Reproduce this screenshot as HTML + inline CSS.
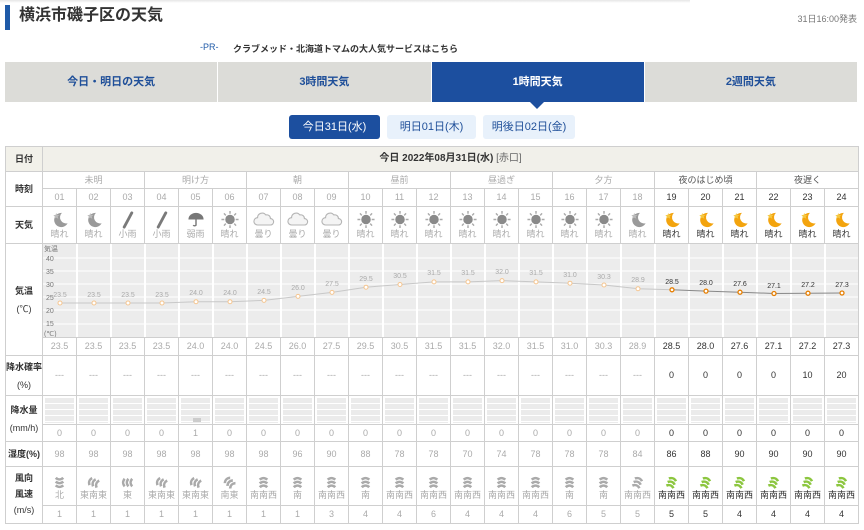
<!DOCTYPE html>
<html><head><meta charset="utf-8">
<style>
*{margin:0;padding:0;box-sizing:border-box}
body{width:864px;height:530px;background:#fff;font-family:"Liberation Sans","Noto Sans CJK JP",sans-serif;position:relative;overflow:hidden;color:#333}
.shadow{position:absolute;left:0;top:0;width:690px;height:3px;background:linear-gradient(#e6e6e6,#fff)}
.bar{position:absolute;left:5px;top:5px;width:5px;height:25px;background:#1f5aa8}
.title{position:absolute;left:19px;top:5px;font-size:16px;font-weight:bold;color:#333;line-height:22px}
.pub{position:absolute;right:7px;top:12px;font-size:9px;color:#777}
.pr{position:absolute;left:200px;top:42px;font-size:9px;color:#1f5aa8}
.prt{position:absolute;left:233px;top:42px;font-size:9px;font-weight:bold;color:#333}
.tabs{position:absolute;left:5px;top:62px;width:852px;height:40px;display:flex}
.tab{flex:1;background:#dcdcd8;color:#1f4f99;font-size:11px;font-weight:bold;text-align:center;line-height:40px;border-right:1px solid #fff}
.tab.on{background:#1c4f9f;color:#fff}
.tri{position:absolute;left:529px;top:101px;border-left:8px solid transparent;border-right:8px solid transparent;border-top:8px solid #1c4f9f}
.db{position:absolute;top:115px;height:24px;line-height:24px;font-size:11px;text-align:center;border-radius:3px;background:#e8f1fb;color:#1f4f99}
table{position:absolute;left:5px;top:146px;border-collapse:collapse;table-layout:fixed;width:853px}
td{border:1px solid #cfcfcf;text-align:center;font-size:9px;color:#aaa;padding:0;line-height:1.2;overflow:hidden;white-space:nowrap}
td.l{color:#333;font-weight:bold;font-size:9px;background:#fff}
.f{color:#333}
.fp{color:#555}
svg{display:block;margin:0 auto}
.rb{margin:2px 2px 1px;height:25px;background:repeating-linear-gradient(#ebebeb 0 5px,#fff 5px 6px);position:relative}
.wi{height:15px;margin-top:4px}
</style></head><body>
<svg width="0" height="0" style="position:absolute">
<defs>
<symbol id="mg" viewBox="0 0 20 20"><path d="M12 3a7.5 7.5 0 1 0 6 11a6.5 6.5 0 0 1-6-11z" fill="#9a9a9a"/><path d="M6 3l1 2.2 2.3.2-1.7 1.5.6 2.3-2.2-1.2-2 1.2.5-2.3L3 5.4l2.3-.2z" fill="#bbb"/></symbol>
<symbol id="mo" viewBox="0 0 20 20"><path d="M12 3a7.5 7.5 0 1 0 6 11a6.5 6.5 0 0 1-6-11z" fill="#f3a40e"/><path d="M6 3l1 2.2 2.3.2-1.7 1.5.6 2.3-2.2-1.2-2 1.2.5-2.3L3 5.4l2.3-.2z" fill="#f5c842"/></symbol>
<symbol id="sun" viewBox="0 0 20 20"><circle cx="10" cy="10" r="5" fill="#8a8a8a"/><g stroke="#aaa" stroke-width="1.5"><path d="M10 1v3M10 16v3M1 10h3M16 10h3M3.6 3.6l2 2M14.4 14.4l2 2M3.6 16.4l2-2M14.4 5.6l2-2"/></g></symbol>
<symbol id="cl" viewBox="0 0 24 20"><path d="M5 16a4 4 0 0 1 0-8a5 5 0 0 1 9-3a4 4 0 0 1 5 4a3.5 3.5 0 0 1 0 7z" fill="#f4f4f4" stroke="#b5b5b5" stroke-width="1.2"/></symbol>
<symbol id="sr" viewBox="0 0 20 20"><path d="M6 18L14 3" stroke="#7a7a7a" stroke-width="3" stroke-linecap="round"/></symbol>
<symbol id="um" viewBox="0 0 20 20"><path d="M2 10a8 7 0 0 1 16 0z" fill="#777"/><path d="M10 9v7a2 2 0 0 1-3 0" stroke="#777" stroke-width="1.5" fill="none"/></symbol>
<symbol id="wg" viewBox="0 0 16 16"><path d="M3 4q5-4 10 0l-2 2q-3-3-6 0zM3 8q5-4 10 0l-2 2q-3-3-6 0zM3 12q5-4 10 0l-2 2q-3-3-6 0z" fill="#aaa"/></symbol>
<symbol id="wn" viewBox="0 0 16 16"><path d="M3 4q5-4 10 0l-2 2q-3-3-6 0zM3 8q5-4 10 0l-2 2q-3-3-6 0zM3 12q5-4 10 0l-2 2q-3-3-6 0z" fill="#8cc63f"/></symbol>
</defs></svg>
<div class="shadow"></div>
<div class="bar"></div>
<div class="title">横浜市磯子区の天気</div>
<div class="pub">31日16:00発表</div>
<div class="pr">-PR-</div>
<div class="prt">クラブメッド・北海道トマムの大人気サービスはこちら</div>
<div class="tabs"><div class="tab">今日・明日の天気</div><div class="tab">3時間天気</div><div class="tab on">1時間天気</div><div class="tab" style="border:0">2週間天気</div></div>
<div class="tri"></div>
<div class="db" style="left:289px;width:91px;background:#1c4f9f;color:#fff">今日31日(水)</div>
<div class="db" style="left:387px;width:89px">明日01日(木)</div>
<div class="db" style="left:483px;width:92px">明後日02日(金)</div>

<table>
<colgroup><col style="width:37px"><col span="24" style="width:34px"></colgroup>
<tr style="height:25px"><td class="l" style="background:#f2f1ea">日付</td><td colspan="24" style="background:#f1f0ea;color:#333;font-weight:bold;font-size:10px">今日 2022年08月31日(水) <span style="font-weight:normal;color:#666">[赤口]</span></td></tr>
<tr style="height:17px"><td class="l" rowspan="2">時刻</td><td colspan="3">未明</td><td colspan="3">明け方</td><td colspan="3">朝</td><td colspan="3">昼前</td><td colspan="3">昼過ぎ</td><td colspan="3">夕方</td><td colspan="3" class="fp">夜のはじめ頃</td><td colspan="3" class="fp">夜遅く</td></tr>
<tr style="height:18px"><td>01</td><td>02</td><td>03</td><td>04</td><td>05</td><td>06</td><td>07</td><td>08</td><td>09</td><td>10</td><td>11</td><td>12</td><td>13</td><td>14</td><td>15</td><td>16</td><td>17</td><td>18</td><td class="f">19</td><td class="f">20</td><td class="f">21</td><td class="f">22</td><td class="f">23</td><td class="f">24</td></tr>
<tr style="height:37px"><td class="l">天気</td>
<td><svg width="20" height="19"><use href="#mg"/></svg>晴れ</td>
<td><svg width="20" height="19"><use href="#mg"/></svg>晴れ</td>
<td><svg width="20" height="19"><use href="#sr"/></svg>小雨</td>
<td><svg width="20" height="19"><use href="#sr"/></svg>小雨</td>
<td><svg width="20" height="19"><use href="#um"/></svg>弱雨</td>
<td><svg width="20" height="19"><use href="#sun"/></svg>晴れ</td>
<td><svg width="22" height="19"><use href="#cl"/></svg>曇り</td>
<td><svg width="22" height="19"><use href="#cl"/></svg>曇り</td>
<td><svg width="22" height="19"><use href="#cl"/></svg>曇り</td>
<td><svg width="20" height="19"><use href="#sun"/></svg>晴れ</td>
<td><svg width="20" height="19"><use href="#sun"/></svg>晴れ</td>
<td><svg width="20" height="19"><use href="#sun"/></svg>晴れ</td>
<td><svg width="20" height="19"><use href="#sun"/></svg>晴れ</td>
<td><svg width="20" height="19"><use href="#sun"/></svg>晴れ</td>
<td><svg width="20" height="19"><use href="#sun"/></svg>晴れ</td>
<td><svg width="20" height="19"><use href="#sun"/></svg>晴れ</td>
<td><svg width="20" height="19"><use href="#sun"/></svg>晴れ</td>
<td><svg width="20" height="19"><use href="#mg"/></svg>晴れ</td>
<td class="f"><svg width="20" height="19"><use href="#mo"/></svg>晴れ</td>
<td class="f"><svg width="20" height="19"><use href="#mo"/></svg>晴れ</td>
<td class="f"><svg width="20" height="19"><use href="#mo"/></svg>晴れ</td>
<td class="f"><svg width="20" height="19"><use href="#mo"/></svg>晴れ</td>
<td class="f"><svg width="20" height="19"><use href="#mo"/></svg>晴れ</td>
<td class="f"><svg width="20" height="19"><use href="#mo"/></svg>晴れ</td></tr>
<tr style="height:94px"><td class="l" rowspan="2" style="line-height:2">気温<br><span style="font-weight:normal">(℃)</span></td>
<td colspan="24" style="padding:0"><svg width="816" height="93" style="display:block;font-family:'Liberation Sans',sans-serif">
<rect width="816" height="93" fill="#ececec"/>
<g stroke="#fff" stroke-width="1"><path d="M0 14h816M0 27h816M0 40h816M0 53h816M0 66h816M0 80h816"/></g>
<g stroke="#fff" stroke-width="2"><path d="M34 0v93M68 0v93M102 0v93M136 0v93M170 0v93M204 0v93M238 0v93M272 0v93M306 0v93M340 0v93M374 0v93M408 0v93M442 0v93M476 0v93M510 0v93M544 0v93M578 0v93M612 0v93M646 0v93M680 0v93M714 0v93M748 0v93M782 0v93"/></g>
<g font-size="7" fill="#777"><text x="1" y="7">気温</text><text x="3" y="17">40</text><text x="3" y="30">35</text><text x="3" y="43">30</text><text x="3" y="56">25</text><text x="3" y="69">20</text><text x="3" y="82">15</text><text x="1" y="92">(℃)</text></g>
<polyline points="17,59 51,59 85,59 119,59 153,57.7 187,57.7 221,56.4 255,52.4 289,48.4 323,43.2 357,40.5 391,37.9 425,37.9 459,36.6 493,37.9 527,39.2 561,41 595,44.7 629,45.8" fill="none" stroke="#c8c8c8" stroke-width="1"/>
<polyline points="629,45.8 663,47.1 697,48.2 731,49.5 765,49.2 799,49" fill="none" stroke="#888" stroke-width="1"/>
<g fill="#fff" stroke="#f5c58f" stroke-width="1"><circle cx="17" cy="59" r="2"/><circle cx="51" cy="59" r="2"/><circle cx="85" cy="59" r="2"/><circle cx="119" cy="59" r="2"/><circle cx="153" cy="57.7" r="2"/><circle cx="187" cy="57.7" r="2"/><circle cx="221" cy="56.4" r="2"/><circle cx="255" cy="52.4" r="2"/><circle cx="289" cy="48.4" r="2"/><circle cx="323" cy="43.2" r="2"/><circle cx="357" cy="40.5" r="2"/><circle cx="391" cy="37.9" r="2"/><circle cx="425" cy="37.9" r="2"/><circle cx="459" cy="36.6" r="2"/><circle cx="493" cy="37.9" r="2"/><circle cx="527" cy="39.2" r="2"/><circle cx="561" cy="41" r="2"/><circle cx="595" cy="44.7" r="2"/></g>
<g fill="#fff" stroke="#e67e00" stroke-width="1.3"><circle cx="629" cy="45.8" r="2"/><circle cx="663" cy="47.1" r="2"/><circle cx="697" cy="48.2" r="2"/><circle cx="731" cy="49.5" r="2"/><circle cx="765" cy="49.2" r="2"/><circle cx="799" cy="49" r="2"/></g>
<g font-size="7" fill="#aaa" text-anchor="middle"><text x="17" y="53">23.5</text><text x="51" y="53">23.5</text><text x="85" y="53">23.5</text><text x="119" y="53">23.5</text><text x="153" y="51">24.0</text><text x="187" y="51">24.0</text><text x="221" y="50">24.5</text><text x="255" y="46">26.0</text><text x="289" y="42">27.5</text><text x="323" y="37">29.5</text><text x="357" y="34">30.5</text><text x="391" y="31">31.5</text><text x="425" y="31">31.5</text><text x="459" y="30">32.0</text><text x="493" y="31">31.5</text><text x="527" y="33">31.0</text><text x="561" y="35">30.3</text><text x="595" y="38">28.9</text></g>
<g font-size="7" fill="#333" text-anchor="middle"><text x="629" y="40">28.5</text><text x="663" y="41">28.0</text><text x="697" y="42">27.6</text><text x="731" y="44">27.1</text><text x="765" y="43">27.2</text><text x="799" y="43">27.3</text></g>
</svg></td></tr>
<tr style="height:18px"><td>23.5</td><td>23.5</td><td>23.5</td><td>23.5</td><td>24.0</td><td>24.0</td><td>24.5</td><td>26.0</td><td>27.5</td><td>29.5</td><td>30.5</td><td>31.5</td><td>31.5</td><td>32.0</td><td>31.5</td><td>31.0</td><td>30.3</td><td>28.9</td><td class="f">28.5</td><td class="f">28.0</td><td class="f">27.6</td><td class="f">27.1</td><td class="f">27.2</td><td class="f">27.3</td></tr>
<tr style="height:40px"><td class="l" style="line-height:2">降水確率<br><span style="font-weight:normal">(%)</span></td><td>---</td><td>---</td><td>---</td><td>---</td><td>---</td><td>---</td><td>---</td><td>---</td><td>---</td><td>---</td><td>---</td><td>---</td><td>---</td><td>---</td><td>---</td><td>---</td><td>---</td><td>---</td><td class="f">0</td><td class="f">0</td><td class="f">0</td><td class="f">0</td><td class="f">10</td><td class="f">20</td></tr>
<tr style="height:29px"><td class="l" rowspan="2" style="line-height:2">降水量<br><span style="font-weight:normal">(mm/h)</span></td><td><div class="rb"></div></td><td><div class="rb"></div></td><td><div class="rb"></div></td><td><div class="rb"></div></td><td><div class="rb"><div style="position:absolute;left:12px;bottom:1px;width:8px;height:4px;background:#ccc"></div></div></td><td><div class="rb"></div></td><td><div class="rb"></div></td><td><div class="rb"></div></td><td><div class="rb"></div></td><td><div class="rb"></div></td><td><div class="rb"></div></td><td><div class="rb"></div></td><td><div class="rb"></div></td><td><div class="rb"></div></td><td><div class="rb"></div></td><td><div class="rb"></div></td><td><div class="rb"></div></td><td><div class="rb"></div></td><td><div class="rb"></div></td><td><div class="rb"></div></td><td><div class="rb"></div></td><td><div class="rb"></div></td><td><div class="rb"></div></td><td><div class="rb"></div></td></tr>
<tr style="height:17px"><td>0</td><td>0</td><td>0</td><td>0</td><td>1</td><td>0</td><td>0</td><td>0</td><td>0</td><td>0</td><td>0</td><td>0</td><td>0</td><td>0</td><td>0</td><td>0</td><td>0</td><td>0</td><td class="f">0</td><td class="f">0</td><td class="f">0</td><td class="f">0</td><td class="f">0</td><td class="f">0</td></tr>
<tr style="height:25px"><td class="l">湿度(%)</td><td>98</td><td>98</td><td>98</td><td>98</td><td>98</td><td>98</td><td>98</td><td>96</td><td>90</td><td>88</td><td>78</td><td>78</td><td>70</td><td>74</td><td>78</td><td>78</td><td>78</td><td>84</td><td class="f">86</td><td class="f">88</td><td class="f">90</td><td class="f">90</td><td class="f">90</td><td class="f">90</td></tr>
<tr style="height:39px"><td class="l" rowspan="2" style="line-height:1.75">風向<br>風速<br><span style="font-weight:normal">(m/s)</span></td>
<td><svg class="wi" width="15" height="15" style="transform:rotate(180deg)"><use href="#wg"/></svg>北</td>
<td><svg class="wi" width="15" height="15" style="transform:rotate(-70deg)"><use href="#wg"/></svg>東南東</td>
<td><svg class="wi" width="15" height="15" style="transform:rotate(-90deg)"><use href="#wg"/></svg>東</td>
<td><svg class="wi" width="15" height="15" style="transform:rotate(-70deg)"><use href="#wg"/></svg>東南東</td>
<td><svg class="wi" width="15" height="15" style="transform:rotate(-70deg)"><use href="#wg"/></svg>東南東</td>
<td><svg class="wi" width="15" height="15" style="transform:rotate(-45deg)"><use href="#wg"/></svg>南東</td>
<td><svg class="wi" width="15" height="15"><use href="#wg"/></svg>南南西</td>
<td><svg class="wi" width="15" height="15"><use href="#wg"/></svg>南</td>
<td><svg class="wi" width="15" height="15"><use href="#wg"/></svg>南南西</td>
<td><svg class="wi" width="15" height="15"><use href="#wg"/></svg>南</td>
<td><svg class="wi" width="15" height="15"><use href="#wg"/></svg>南南西</td>
<td><svg class="wi" width="15" height="15"><use href="#wg"/></svg>南南西</td>
<td><svg class="wi" width="15" height="15"><use href="#wg"/></svg>南南西</td>
<td><svg class="wi" width="15" height="15"><use href="#wg"/></svg>南南西</td>
<td><svg class="wi" width="15" height="15"><use href="#wg"/></svg>南南西</td>
<td><svg class="wi" width="15" height="15"><use href="#wg"/></svg>南</td>
<td><svg class="wi" width="15" height="15"><use href="#wg"/></svg>南</td>
<td><svg class="wi" width="15" height="15" style="transform:rotate(20deg)"><use href="#wg"/></svg>南南西</td>
<td class="f"><svg class="wi" width="15" height="15" style="transform:rotate(20deg)"><use href="#wn"/></svg>南南西</td>
<td class="f"><svg class="wi" width="15" height="15" style="transform:rotate(20deg)"><use href="#wn"/></svg>南南西</td>
<td class="f"><svg class="wi" width="15" height="15" style="transform:rotate(20deg)"><use href="#wn"/></svg>南南西</td>
<td class="f"><svg class="wi" width="15" height="15" style="transform:rotate(20deg)"><use href="#wn"/></svg>南南西</td>
<td class="f"><svg class="wi" width="15" height="15" style="transform:rotate(20deg)"><use href="#wn"/></svg>南南西</td>
<td class="f"><svg class="wi" width="15" height="15" style="transform:rotate(20deg)"><use href="#wn"/></svg>南南西</td></tr>
<tr style="height:18px"><td>1</td><td>1</td><td>1</td><td>1</td><td>1</td><td>1</td><td>1</td><td>1</td><td>3</td><td>4</td><td>4</td><td>6</td><td>4</td><td>4</td><td>4</td><td>6</td><td>5</td><td>5</td><td class="f">5</td><td class="f">5</td><td class="f">4</td><td class="f">4</td><td class="f">4</td><td class="f">4</td></tr>
</table>
</body></html>
